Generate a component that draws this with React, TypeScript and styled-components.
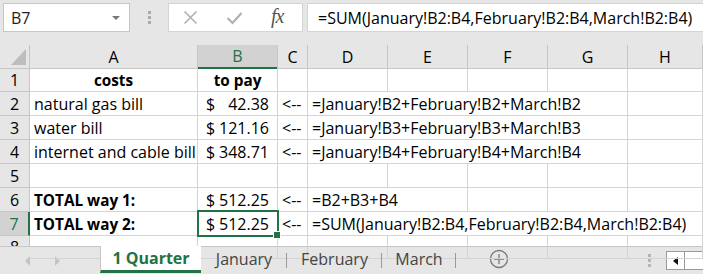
import React from "react";
import styled, { createGlobalStyle, css } from "styled-components";

const GREEN = "#217346";
const GRID = "#d4d4d4";
const HEAD_LINE = "#c6c6c6";
const CELL_FONT = `"Open Sans", "Noto Sans", sans-serif`;

const GlobalStyle = createGlobalStyle`
  html, body {
    margin: 0;
    padding: 0;
    background: #e6e6e6;
  }
  * {
    box-sizing: border-box;
  }
`;

const COLS = "30px 168px 80px 30px 80px 80px 80px 80px 75px";

const Window = styled.div`
  width: 703px;
  height: 274px;
  overflow: hidden;
  background: #e6e6e6;
  display: flex;
  flex-direction: column;
  font-family: ${CELL_FONT};
  color: #000;
`;

/* ---------- formula bar ---------- */

const FormulaBar = styled.div`
  height: 45px;
  flex: none;
  display: flex;
  align-items: flex-start;
  padding: 3px 0 0 3px;
`;

const NameBox = styled.div`
  width: 127px;
  height: 29px;
  background: #fff;
  border: 1px solid ${HEAD_LINE};
  display: flex;
  align-items: center;
  justify-content: space-between;
  padding: 0 9px 0 7px;
  font-size: 16px;
  color: #222;
`;

const DropArrow = styled.span`
  width: 0;
  height: 0;
  border-left: 4px solid transparent;
  border-right: 4px solid transparent;
  border-top: 4px solid #777;
`;

const Grip = styled.div`
  width: 38px;
  height: 29px;
  display: flex;
  flex-direction: column;
  align-items: center;
  justify-content: center;
  gap: 2px;
  span {
    width: 3px;
    height: 3px;
    background: #aaa;
  }
`;

const FxButtons = styled.div`
  width: 135px;
  height: 29px;
  background: #fff;
  border: 1px solid ${GRID};
  display: flex;
  align-items: center;
  padding: 0 0 0 14px;
  gap: 28px;
`;

const Fx = styled.span`
  font-family: "Liberation Serif", "DejaVu Serif", serif;
  font-style: italic;
  font-size: 20px;
  color: #555;
  letter-spacing: -1px;
  margin-top: -3px;
`;

const FormulaInput = styled.div`
  flex: 1;
  height: 29px;
  margin-left: 4px;
  background: #fff;
  border: 1px solid ${GRID};
  border-right: none;
  display: flex;
  align-items: center;
  padding-left: 10px;
  font-size: 16px;
  white-space: nowrap;
`;

/* ---------- sheet ---------- */

const Sheet = styled.div`
  flex: none;
  height: 201px;
  display: flex;
  flex-direction: column;
  background: #fff;
`;

const Row = styled.div<{ $h: number }>`
  display: grid;
  grid-template-columns: ${COLS};
  height: ${(p) => p.$h}px;
  flex: none;
`;

const ColHead = styled.div<{ $active?: boolean }>`
  background: ${(p) => (p.$active ? "#d2d2d2" : "#e6e6e6")};
  border-right: 1px solid ${HEAD_LINE};
  border-bottom: ${(p) => (p.$active ? `2px solid ${GREEN}` : `1px solid ${HEAD_LINE}`)};
  color: ${(p) => (p.$active ? GREEN : "#000")};
  font-size: 16px;
  display: flex;
  align-items: center;
  justify-content: center;
`;

const Corner = styled.div`
  background: #e6e6e6;
  border-right: 1px solid ${HEAD_LINE};
  border-bottom: 1px solid ${HEAD_LINE};
  position: relative;
  &::after {
    content: "";
    position: absolute;
    right: 3px;
    bottom: 3px;
    width: 0;
    height: 0;
    border-left: 15px solid transparent;
    border-bottom: 16px solid #bdbdbd;
  }
`;

const RowHead = styled.div<{ $active?: boolean }>`
  background: ${(p) => (p.$active ? "#d2d2d2" : "#e6e6e6")};
  border-right: ${(p) => (p.$active ? `2px solid ${GREEN}` : `1px solid ${HEAD_LINE}`)};
  border-bottom: 1px solid ${HEAD_LINE};
  color: ${(p) => (p.$active ? GREEN : "#000")};
  font-size: 16px;
  display: flex;
  align-items: center;
  justify-content: center;
`;

const Cell = styled.div<{
  $align?: "left" | "center";
  $bold?: boolean;
  $span?: number;
  $selected?: boolean;
}>`
  grid-column: span ${(p) => p.$span ?? 1};
  border-right: 1px solid ${GRID};
  border-bottom: 1px solid ${GRID};
  display: flex;
  align-items: center;
  justify-content: ${(p) => (p.$align === "center" ? "center" : "flex-start")};
  padding: 0 4px;
  font-size: ${(p) => (p.$bold ? 15.3 : 16)}px;
  font-weight: ${(p) => (p.$bold ? 700 : 400)};
  white-space: nowrap;
  position: relative;
  ${(p) =>
    p.$selected &&
    css`
      z-index: 2;
      &::after {
        content: "";
        position: absolute;
        top: -2px;
        left: -1px;
        right: -2px;
        bottom: -2px;
        border: 2px solid ${GREEN};
      }
      &::before {
        content: "";
        position: absolute;
        right: -4px;
        bottom: -4px;
        width: 6px;
        height: 6px;
        background: ${GREEN};
        border: 1px solid #fff;
        z-index: 3;
      }
    `}
`;

const Money = styled(Cell)`
  justify-content: space-between;
  padding: 0 8px 0 8px;
`;

/* ---------- tab bar ---------- */

const TabBar = styled.div`
  flex: 1;
  display: flex;
  align-items: stretch;
  background: #e6e6e6;
  border-top: 1px solid ${HEAD_LINE};
`;

const TabNav = styled.div`
  width: 100px;
  display: flex;
  align-items: center;
  gap: 25px;
  padding-left: 25px;
`;

const NavArrow = styled.span<{ $dir: "left" | "right" }>`
  width: 0;
  height: 0;
  border-top: 5px solid transparent;
  border-bottom: 5px solid transparent;
  ${(p) =>
    p.$dir === "left"
      ? css`border-right: 5px solid #c4c4c4;`
      : css`border-left: 5px solid #c4c4c4;`}
`;

const Tab = styled.div<{ $active?: boolean; $w: number }>`
  width: ${(p) => p.$w}px;
  display: flex;
  align-items: center;
  justify-content: center;
  font-size: 16px;
  padding-bottom: 3px;
  position: relative;
  ${(p) =>
    p.$active
      ? css`
          background: #fff;
          color: ${GREEN};
          font-weight: 700;
          border-left: 1px solid ${HEAD_LINE};
          border-bottom: 3px solid ${GREEN};
          margin-top: -1px;
          margin-bottom: 1px;
          padding-bottom: 0;
        `
      : css`
          color: #444;
          &::after {
            content: "";
            position: absolute;
            right: 0;
            top: 6px;
            bottom: 6px;
            width: 1px;
            background: #9a9a9a;
          }
        `}
`;

const AddSheet = styled.div`
  width: 86px;
  display: flex;
  align-items: center;
  justify-content: center;
  padding-bottom: 3px;
`;

const TabSpacer = styled.div`
  flex: 1;
  display: flex;
  align-items: center;
  justify-content: flex-end;
  padding-right: 15px;
`;

const ScrollBox = styled.div`
  width: 37px;
  height: 19px;
  margin-top: 4px;
  background: #fff;
  border: 1px solid #9a9a9a;
  border-right: none;
  display: flex;
  align-items: center;
  span:first-child {
    width: 18px;
    height: 100%;
    border-right: 1px solid #9a9a9a;
    display: flex;
    align-items: center;
    justify-content: center;
  }
`;

const SmallArrow = styled.i`
  width: 0;
  height: 0;
  border-top: 4px solid transparent;
  border-bottom: 4px solid transparent;
  border-right: 5px solid #111;
`;

const VDots = styled.div`
  display: flex;
  flex-direction: column;
  gap: 2px;
  span {
    width: 3px;
    height: 3px;
    background: #b5b5b5;
  }
`;

const Arrow = () => <Cell>{"<--"}</Cell>;

type Line = {
  n: number;
  label?: string;
  bold?: boolean;
  amount?: string;
  formula?: string;
  span?: number;
  selected?: boolean;
};

const lines: Line[] = [
  { n: 2, label: "natural gas bill", amount: "42.38", formula: "=January!B2+February!B2+March!B2", span: 4 },
  { n: 3, label: "water bill", amount: "121.16", formula: "=January!B3+February!B3+March!B3", span: 4 },
  { n: 4, label: "internet and cable bill", amount: "348.71", formula: "=January!B4+February!B4+March!B4", span: 4 },
  { n: 5 },
  { n: 6, label: "TOTAL way 1:", bold: true, amount: "512.25", formula: "=B2+B3+B4", span: 2 },
  {
    n: 7,
    label: "TOTAL way 2:",
    bold: true,
    amount: "512.25",
    formula: "=SUM(January!B2:B4,February!B2:B4,March!B2:B4)",
    span: 5,
    selected: true,
  },
];

const EmptyCells = ({ count }: { count: number }) => (
  <>
    {Array.from({ length: count }).map((_, i) => (
      <Cell key={i} />
    ))}
  </>
);

const DataRow = ({ line }: { line: Line }) => {
  if (!line.label) {
    return (
      <Row $h={24}>
        <RowHead>{line.n}</RowHead>
        <EmptyCells count={8} />
      </Row>
    );
  }
  const span = line.span ?? 1;
  return (
    <Row $h={24}>
      <RowHead $active={line.selected}>{line.n}</RowHead>
      <Cell $bold={line.bold}>{line.label}</Cell>
      <Money $selected={line.selected}>
        <span>$</span>
        <span>{line.amount}</span>
      </Money>
      <Arrow />
      <Cell $span={span}>{line.formula}</Cell>
      <EmptyCells count={5 - span} />
    </Row>
  );
};

export default function App() {
  const letters = ["A", "B", "C", "D", "E", "F", "G", "H"];
  return (
    <Window>
      <GlobalStyle />
      <FormulaBar>
        <NameBox>
          <span>B7</span>
          <DropArrow />
        </NameBox>
        <Grip>
          <span />
          <span />
          <span />
        </Grip>
        <FxButtons>
          <svg width="15" height="15" viewBox="0 0 15 15">
            <path d="M1.5 1.5 L13.5 13.5 M13.5 1.5 L1.5 13.5" stroke="#b0b0b0" strokeWidth="1.6" fill="none" />
          </svg>
          <svg width="17" height="14" viewBox="0 0 17 14">
            <path d="M1.5 7 L6.5 12 L15.5 2" stroke="#b0b0b0" strokeWidth="2.2" fill="none" />
          </svg>
          <Fx>fx</Fx>
        </FxButtons>
        <FormulaInput>=SUM(January!B2:B4,February!B2:B4,March!B2:B4)</FormulaInput>
      </FormulaBar>

      <Sheet>
        <Row $h={23}>
          <Corner />
          {letters.map((l) => (
            <ColHead key={l} $active={l === "B"}>
              {l}
            </ColHead>
          ))}
        </Row>
        <Row $h={24}>
          <RowHead>1</RowHead>
          <Cell $align="center" $bold>
            costs
          </Cell>
          <Cell $align="center" $bold>
            to pay
          </Cell>
          <EmptyCells count={6} />
        </Row>
        {lines.map((line) => (
          <DataRow key={line.n} line={line} />
        ))}
        <Row $h={10}>
          <RowHead>8</RowHead>
          <EmptyCells count={8} />
        </Row>
      </Sheet>

      <TabBar>
        <TabNav>
          <NavArrow $dir="left" />
          <NavArrow $dir="right" />
        </TabNav>
        <Tab $active $w={101}>
          1 Quarter
        </Tab>
        <Tab $w={86}>January</Tab>
        <Tab $w={95}>February</Tab>
        <Tab $w={74}>March</Tab>
        <AddSheet>
          <svg width="20" height="20" viewBox="0 0 20 20">
            <circle cx="10" cy="10" r="8.5" stroke="#7a7a7a" strokeWidth="1.3" fill="none" />
            <path d="M10 5 V15 M5 10 H15" stroke="#7a7a7a" strokeWidth="1.3" />
          </svg>
        </AddSheet>
        <TabSpacer>
          <VDots>
            <span />
            <span />
            <span />
          </VDots>
        </TabSpacer>
        <ScrollBox>
          <span>
            <SmallArrow />
          </span>
          <span />
        </ScrollBox>
      </TabBar>
    </Window>
  );
}
